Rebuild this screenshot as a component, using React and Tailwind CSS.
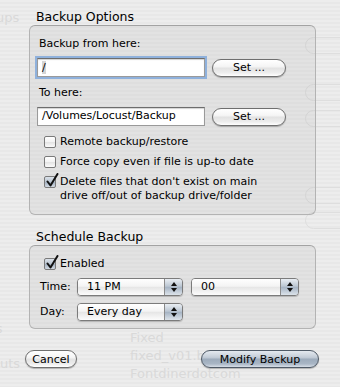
import { useState } from 'react'

// Aqua-style glossy push button
function AquaButton({ children, className = '', primary = false }) {
  const skin = primary
    ? 'border-[#4f5a67] bg-[linear-gradient(to_bottom,#e4e9ef_0%,#c3ccd7_40%,#9eacbc_52%,#a9b6c5_80%,#d6dee7_100%)]'
    : 'border-[#6f6f6f] bg-[linear-gradient(to_bottom,#ffffff_0%,#f5f5f5_40%,#e3e3e3_52%,#ededed_80%,#ffffff_100%)]'
  return (
    <div
      className={`flex items-center justify-center h-[18px] rounded-full border text-[11px] leading-none text-black shadow-[0_1px_1px_rgba(0,0,0,0.25)] ${skin} ${className}`}
    >
      {children}
    </div>
  )
}

function TextField({ children, focused = false }) {
  return (
    <div
      className={`flex items-center h-[19px] w-[168px] px-[4px] bg-white border border-[#9a9a9a] border-t-[#6d6d6d] text-[11px] shadow-[inset_0_1px_1px_rgba(0,0,0,0.18)] ${
        focused ? 'outline outline-[2px] outline-[#8fb1dc] -outline-offset-[0px] shadow-[0_0_2px_2px_rgba(120,160,215,0.45)]' : ''
      }`}
    >
      {children}
    </div>
  )
}

function Checkbox({ checked }) {
  return (
    <div
      className={`relative w-[12px] h-[12px] shrink-0 rounded-[2px] border border-[#7a7a7a] ${
        checked
          ? 'bg-[linear-gradient(to_bottom,#dbe2ea,#b9c4d0_50%,#a4b2c2_52%,#d3dbe4)]'
          : 'bg-[linear-gradient(to_bottom,#ffffff,#f3f3f3_50%,#e3e3e3_52%,#fbfbfb)]'
      }`}
    >
      {checked && (
        <svg
          className="absolute -top-[4px] left-[1px]"
          width="13"
          height="15"
          viewBox="0 0 13 15"
          fill="none"
        >
          <path d="M1.5 8.5 L4.5 12.5 L11.5 1" stroke="#111" strokeWidth="2" strokeLinecap="round" strokeLinejoin="round" />
        </svg>
      )}
    </div>
  )
}

function CheckRow({ checked, children, className = '' }) {
  return (
    <div className={`flex items-start gap-[4px] leading-[14px] ${className}`}>
      <div className="mt-[1px]">
        <Checkbox checked={checked} />
      </div>
      <div>{children}</div>
    </div>
  )
}

function Popup({ value, className = '' }) {
  return (
    <div className={`flex h-[18px] rounded-[4px] border border-[#7b7b7b] overflow-hidden shadow-[0_1px_1px_rgba(0,0,0,0.2)] ${className}`}>
      <div className="flex-1 flex items-center pl-[9px] text-[11px] bg-[linear-gradient(to_bottom,#ffffff,#f4f4f4_45%,#e6e6e6_52%,#fcfcfc)]">
        {value}
      </div>
      <div className="w-[18px] border-l border-[#8a8a8a] flex flex-col items-center justify-center gap-[2px] bg-[linear-gradient(to_bottom,#e9eef3,#bcc7d3_45%,#a6b4c4_52%,#dce3ea)]">
        <svg width="6" height="4" viewBox="0 0 6 4">
          <path d="M3 0 L6 4 L0 4 Z" fill="#111" />
        </svg>
        <svg width="6" height="4" viewBox="0 0 6 4">
          <path d="M0 0 L6 0 L3 4 Z" fill="#111" />
        </svg>
      </div>
    </div>
  )
}

// faint window behind the sheet
function GhostWindow() {
  const ghost = 'absolute text-[#d9d9d9]'
  return (
    <div className="absolute inset-0 pointer-events-none select-none">
      <div className={`${ghost} left-[-4px] top-[8px] text-[13px]`}>ups</div>
      <div className={`${ghost} left-[-16px] top-[319px] text-[13px]`}>ins</div>
      <div className={`${ghost} left-[-8px] top-[354px] text-[13px]`}>outs</div>
      <div className="absolute left-[305px] top-[37px] w-[60px] h-[17px] rounded-full border border-[#dedede]" />
      <div className="absolute left-[305px] top-[84px] w-[60px] h-[17px] rounded-full border border-[#dedede]" />
      <div className="absolute left-[305px] top-[110px] w-[60px] h-[17px] rounded-full border border-[#dedede]" />
      <div className="absolute left-[305px] top-[187px] w-[60px] h-[17px] rounded-full border border-[#dedede]" />
      <div className="absolute left-[305px] top-[212px] w-[60px] h-[17px] rounded-full border border-[#dedede]" />
      <div className={`${ghost} left-[130px] top-[328px] text-[13px]`}>Fixed</div>
      <div className={`${ghost} left-[130px] top-[346px] text-[13px]`}>fixed_v01.bmp</div>
      <div className={`${ghost} left-[130px] top-[364px] text-[13px]`}>Fontdinerdotcom</div>
    </div>
  )
}

export default function App() {
  const [opts] = useState({ remote: false, force: false, del: true, enabled: true })

  return (
    <div className="relative w-[340px] h-[387px] overflow-hidden font-['DejaVu_Sans','Liberation_Sans',sans-serif] text-black text-[11px] bg-[repeating-linear-gradient(to_bottom,#ededed_0px,#ededed_2px,#e8e8e8_2px,#e8e8e8_4px)]">
      <GhostWindow />

      <div className="relative flex flex-col pt-[9px] pl-[25px]">
        {/* Backup Options */}
        <div className="ml-[11px] h-[16px] leading-[16px] text-[12.5px]">Backup Options</div>
        <div className="ml-[4px] w-[287px] h-[190px] rounded-[6px] border border-[#b3b3b3] border-t-[#a3a3a3] bg-[rgba(0,0,0,0.045)] pt-[11px] pl-[7px]">
          <div className="pl-[2px] leading-[14px]">Backup from here:</div>
          <div className="mt-[7px] flex items-center gap-[7px]">
            <TextField focused>
              <span className="bg-[#d5d5d5] leading-[13px]">/</span>
            </TextField>
            <AquaButton className="w-[74px]">Set ...</AquaButton>
          </div>
          <div className="mt-[9px] pl-[2px] leading-[14px]">To here:</div>
          <div className="mt-[7px] flex items-center gap-[7px]">
            <TextField>/Volumes/Locust/Backup</TextField>
            <AquaButton className="w-[74px]">Set ...</AquaButton>
          </div>
          <div className="mt-[9px] pl-[7px] flex flex-col gap-[6px]">
            <CheckRow checked={opts.remote}>Remote backup/restore</CheckRow>
            <CheckRow checked={opts.force}>Force copy even if file is up-to date</CheckRow>
            <CheckRow checked={opts.del}>
              Delete files that don't exist on main
              <br />
              drive off/out of backup drive/folder
            </CheckRow>
          </div>
        </div>

        {/* Schedule Backup */}
        <div className="mt-[14px] ml-[11px] h-[16px] leading-[16px] text-[12.5px]">Schedule Backup</div>
        <div className="ml-[4px] w-[287px] h-[84px] rounded-[6px] border border-[#b3b3b3] border-t-[#a3a3a3] bg-[rgba(0,0,0,0.045)] pt-[11px] pl-[7px]">
          <CheckRow checked={opts.enabled} className="pl-[7px]">Enabled</CheckRow>
          <div className="mt-[7px] flex items-center">
            <div className="w-[40px] pl-[3px]">Time:</div>
            <Popup value="11 PM" className="w-[106px]" />
            <Popup value="00" className="ml-[8px] w-[108px]" />
          </div>
          <div className="mt-[7px] flex items-center">
            <div className="w-[40px] pl-[3px]">Day:</div>
            <Popup value="Every day" className="w-[106px]" />
          </div>
        </div>

        {/* Buttons */}
        <div className="mt-[21px] flex items-center">
          <AquaButton className="w-[52px]">Cancel</AquaButton>
          <AquaButton primary className="ml-[124px] w-[118px]">Modify Backup</AquaButton>
        </div>
      </div>
    </div>
  )
}
